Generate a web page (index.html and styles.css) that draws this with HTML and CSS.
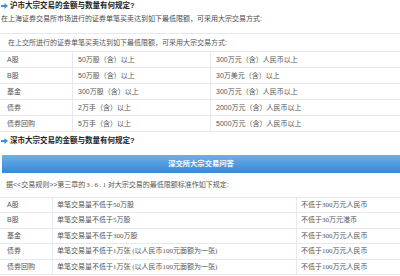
FILE: index.html
```html
<!DOCTYPE html>
<html lang="zh-CN">
<head>
<meta charset="utf-8">
<link rel="stylesheet" href="styles.css">
</head>
<body>
<div class="page">
  <h2 class="q"><svg class="arrow" width="7" height="6" viewBox="0 0 7 6"><path d="M0 2h3.5V0L7 3 3.5 6V4H0z" fill="#3d8fe0"/></svg>沪市大宗交易的金额与数量有何规定?</h2>
  <p class="lead">在上海证券交易所市场进行的证券单笔买卖达到如下最低限额，可采用大宗交易方式:</p>
  <div class="t1">
    <div class="t1-head">在上交所进行的证券单笔买卖达到如下最低限额，可采用大宗交易方式:</div>
    <div class="t1-row"><span>A股</span><span>50万股（含）以上</span><span>300万元（含）人民币以上</span></div>
    <div class="t1-row"><span>B股</span><span>50万股（含）以上</span><span>30万美元（含）以上</span></div>
    <div class="t1-row"><span>基金</span><span>300万股（含）以上</span><span>300万元（含）人民币以上</span></div>
    <div class="t1-row"><span>债券</span><span>2万手（含）以上</span><span>2000万元（含）人民币以上</span></div>
    <div class="t1-row"><span>债券回购</span><span>5万手（含）以上</span><span>5000万元（含）人民币以上</span></div>
  </div>
  <h2 class="q q2"><svg class="arrow" width="7" height="6" viewBox="0 0 7 6"><path d="M0 2h3.5V0L7 3 3.5 6V4H0z" fill="#3d8fe0"/></svg>深市大宗交易的金额与数量有何规定?</h2>
  <div class="t2">
    <div class="t2-bar">深交所大宗交易问答</div>
    <div class="t2-head">据&lt;&lt;交易规则&gt;&gt;第三章的<span class="num">3.6.1</span>对大宗交易的最低限额标准作如下规定:</div>
    <div class="t2-row"><span>A股</span><span>单笔交易量不低于50万股</span><span>不低于300万元人民币</span></div>
    <div class="t2-row"><span>B股</span><span>单笔交易量不低于5万股</span><span>不低于30万元港币</span></div>
    <div class="t2-row"><span>基金</span><span>单笔交易量不低于300万股</span><span>不低于300万元人民币</span></div>
    <div class="t2-row"><span>债券</span><span>单笔交易量不低于1万张 (以人民币100元面额为一张)</span><span>不低于100万元人民币</span></div>
    <div class="t2-row"><span>债券回购</span><span>单笔交易量不低于1万张 (以人民币100元面额为一张)</span><span>不低于100万元人民币</span></div>
  </div>
</div>
</body>
</html>
```

FILE: styles.css
```css
html, body {
  margin: 0;
  padding: 0;
  background: #ffffff;
}
body {
  width: 400px;
  height: 276px;
  overflow: hidden;
  font-family: "Liberation Sans", "Noto Sans CJK SC", sans-serif;
  font-size: 7px;
  color: #555555;
}
.page {
  width: 400px;
}
.q {
  margin: 0;
  height: 12px;
  line-height: 12px;
  font-size: 7.5px;
  font-weight: bold;
  color: #222222;
  display: flex;
  align-items: center;
  padding-left: 1px;
}
.arrow {
  margin-right: 2px;
  flex: none;
}
.lead {
  margin: 0;
  height: 14px;
  line-height: 14px;
  padding-left: 1px;
  color: #4a4a4a;
}
.t1 {
  margin-top: 7px;
  border-top: 1px solid #e6eaee;
}
.t1-head {
  box-sizing: border-box;
  height: 18px;
  line-height: 17px;
  padding-left: 8px;
  border-bottom: 1px solid #e6eaee;
}
.t1-row {
  box-sizing: border-box;
  display: grid;
  grid-template-columns: 72px 138px 1fr;
  height: 16px;
  border-bottom: 1px solid #e6eaee;
}
.t1-row span {
  line-height: 15px;
  white-space: nowrap;
}
.t1-row span:nth-child(1) { padding-left: 7px; }
.t1-row span:nth-child(2) { padding-left: 5px; border-left: 1px solid #e6eaee; }
.t1-row span:nth-child(3) { padding-left: 5px; border-left: 1px solid #e6eaee; }
.q2 {
  margin-top: 3px;
}
.t2 {
  margin-top: 8px;
}
.t2-bar {
  margin-left: 2px;
  height: 18px;
  line-height: 18px;
  text-align: center;
  color: #ffffff;
  font-weight: bold;
  font-size: 7.3px;
  background: linear-gradient(#6cb0ea, #3b87d6);
}
.t2-head {
  box-sizing: border-box;
  height: 25px;
  line-height: 24px;
  padding-left: 6px;
  border-bottom: 1px solid #e6eaee;
}
.num {
  font-family: "Liberation Serif", serif;
  letter-spacing: 1.5px;
  padding-left: 1px;
}
.t2-row {
  box-sizing: border-box;
  display: grid;
  grid-template-columns: 52px 244px 1fr;
  height: 15.4px;
  border-bottom: 1px solid #e6eaee;
  font-family: "Liberation Serif", "Noto Sans CJK SC", serif;
}
.t2-row span {
  line-height: 14.4px;
  white-space: nowrap;
  overflow: hidden;
}
.t2-row span:nth-child(1) { padding-left: 7px; font-family: "Liberation Sans", "Noto Sans CJK SC", sans-serif; }
.t2-row span:nth-child(2) { padding-left: 4px; border-left: 1px solid #e6eaee; }
.t2-row span:nth-child(3) { padding-left: 4px; border-left: 1px solid #e6eaee; }
```
